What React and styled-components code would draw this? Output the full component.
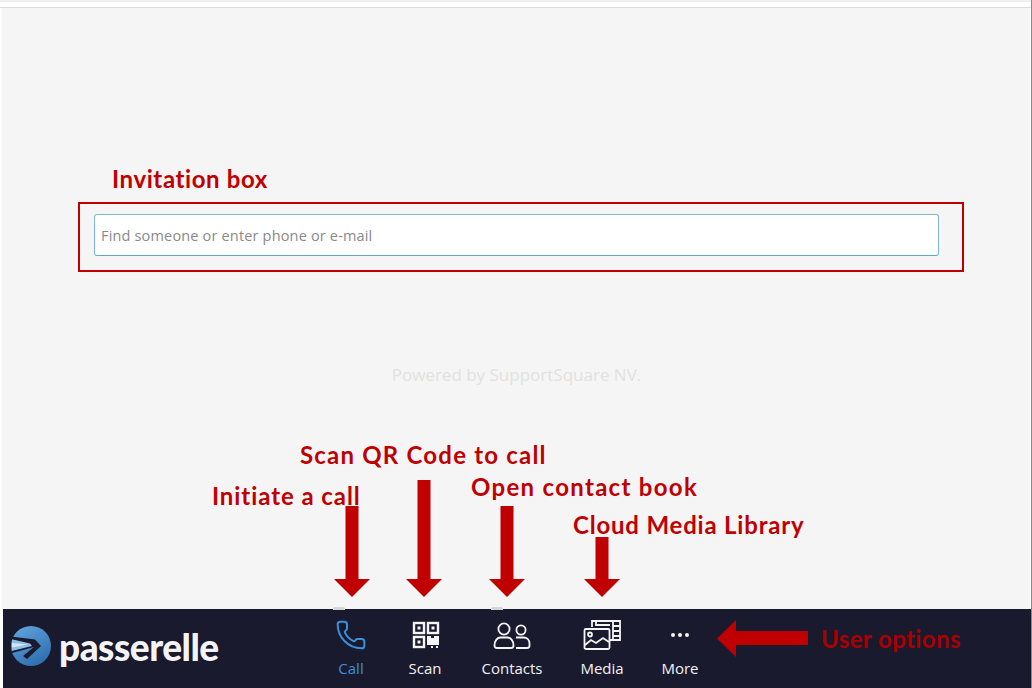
import React from "react";
import styled, { createGlobalStyle } from "styled-components";
import { Phone } from "lucide-react";

const Global = createGlobalStyle`
  html, body { margin: 0; padding: 0; background: #fff; }
  * { box-sizing: border-box; }
`;

const Page = styled.div`
  position: relative;
  width: 1032px;
  height: 688px;
  overflow: hidden;
  display: flex;
  flex-direction: column;
  background: #fff;
  padding: 0 1px 0 2px;
  border-right: 1px solid #8a8a8a;
  font-family: "Open Sans", sans-serif;
`;

const TopRule = styled.div`
  height: 8px;
  flex: none;
  margin: 0 -1px 0 -2px;
  background: #fff;
  border-top: 2px solid #efefef;
  border-bottom: 1px solid #dcdcdc;
`;

const Main = styled.main`
  flex: 1;
  background: #f5f5f5;
  display: flex;
  flex-direction: column;
  align-items: center;
  padding: 206px 91px 0 92px;
`;

const Search = styled.input`
  width: 100%;
  height: 42px;
  flex: none;
  border: 1px solid #7fb8c8;
  border-bottom-color: #62a9bd;
  border-radius: 3px;
  background: #fff;
  padding: 0 6px;
  font: 14.5px "Open Sans", sans-serif;
  letter-spacing: 0.17px;
  outline: none;
  &::placeholder { color: #8a8a8a; opacity: 1; }
`;

const Powered = styled.p`
  margin: 108px 0 0;
  font-size: 17px;
  line-height: 22px;
  color: #e1e1e1;
`;

const Nav = styled.nav`
  height: 79px;
  flex: none;
  margin-left: 1px;
  margin-right: -1px;
  background: #1a1a2e;
  display: flex;
  align-items: flex-start;
  padding-left: 8px;
`;

const Brand = styled.div`
  display: flex;
  align-items: center;
  gap: 8px;
  height: 78px;
  width: 302px;
  padding-bottom: 4px;
  flex: none;
`;

const BrandName = styled.span`
  font-family: Lato, sans-serif;
  font-weight: 900;
  font-size: 37px;
  letter-spacing: -0.5px;
  line-height: 1;
  color: #f4f4f6;
`;

const Items = styled.div`
  display: flex;
  align-items: flex-start;
  height: 100%;
`;

const Item = styled.button`
  appearance: none;
  border: 0;
  background: none;
  padding: 10px 0 0;
  width: ${p => p.$w}px;
  display: flex;
  flex-direction: column;
  align-items: center;
  color: ${p => (p.$active ? "#3a90dc" : "#f2f2f2")};
  font: 15px/20px "Open Sans", sans-serif;
`;

const IconSlot = styled.span`
  height: 32px;
  margin-bottom: 7px;
  display: flex;
  align-items: center;
  justify-content: center;
`;

const Nub = styled.span`
  position: absolute;
  top: 607px;
  left: ${p => p.$x}px;
  width: 12px;
  height: 3px;
  border-radius: 2px 2px 0 0;
  background: #d5d5d8;
`;

const Frame = styled.div`
  position: absolute;
  left: 78px;
  top: 202px;
  width: 886px;
  height: 70px;
  border: 2px solid #c00000;
  pointer-events: none;
`;

const Note = styled.span`
  position: absolute;
  left: ${p => p.$x}px;
  top: ${p => p.$y}px;
  font-family: Lato, sans-serif;
  font-weight: 700;
  font-size: 24px;
  line-height: 28px;
  letter-spacing: ${p => p.$ls}px;
  white-space: nowrap;
  color: ${p => p.$c || "#c00000"};
`;

const ArrowMark = styled.svg`
  position: absolute;
  left: ${p => p.$x}px;
  top: ${p => p.$y}px;
  display: block;
`;

const DownArrow = ({ x, top }) => {
  const h = 597 - top;
  return (
    <ArrowMark $x={x} $y={top} width="36" height={h} viewBox={`0 0 36 ${h}`}>
      <path d={`M11.5 0H24.5V${h - 18}H36L18 ${h}L0 ${h - 18}H11.5Z`} fill="#c00000" />
    </ArrowMark>
  );
};

const QrIcon = () => (
  <svg width="28" height="28" viewBox="0 0 28 28" fill="none" stroke="#f5f5f5" strokeWidth="2.400" style={{ marginLeft: 2 }}>
    <rect x="2" y="2" width="10" height="10" />
    <rect x="16" y="2" width="10" height="10" />
    <rect x="2" y="16" width="10" height="10" />
    <g fill="#f5f5f5" stroke="none">
      <rect x="5.500" y="5.500" width="3" height="3" />
      <rect x="19.500" y="5.500" width="3" height="3" />
      <rect x="5.500" y="19.500" width="3" height="3" />
      <path d="M15 15h4v2h3v-2h5v9h-12z" />
      <rect x="19" y="25" width="2" height="2" />
      <rect x="24" y="25" width="2" height="2" />
    </g>
  </svg>
);

const ContactsIcon = () => (
  <svg width="38" height="30" viewBox="0 0 38 30" fill="none" stroke="#f5f5f5" strokeWidth="1.800">
    <circle cx="11" cy="9" r="5.600" />
    <path d="M1.500 25.500c0-5 3-8 6-8h7c3 0 6 3 6 8 0 1.500-.8 2.500-2.500 2.500H4c-1.700 0-2.500-1-2.500-2.500z" />
    <circle cx="28" cy="10" r="4.600" />
    <path d="M23 17.500h7.500c3.500 0 6 2.500 6 6v2c0 1.500-1 2.500-2.500 2.500H23" />
  </svg>
);

const MediaIcon = () => (
  <svg width="38" height="32" viewBox="0 0 38 32" fill="none" stroke="#f5f5f5" strokeWidth="1.800">
    <path d="M9 8V2h28v19H27" />
    <path d="M13 2v4h14" />
    <path d="M30 2v19M30 7h7M30 12h7M30 17h7" />
    <rect x="1.500" y="10" width="25" height="20" rx="1.500" fill="#1a1a2e" />
    <circle cx="7" cy="15.500" r="2" />
    <path d="M2 26l6-5 5 3 7-5 6 4" />
  </svg>
);

const DotsIcon = () => (
  <svg width="22" height="6" viewBox="0 0 22 6" fill="#f5f5f5">
    <circle cx="4" cy="3" r="2" />
    <circle cx="11" cy="3" r="2" />
    <circle cx="18" cy="3" r="2" />
  </svg>
);

const LogoMark = () => (
  <svg width="40" height="40" viewBox="0 0 40 40">
    <defs>
      <linearGradient id="lg" x1="0" y1="0" x2="0.6" y2="1">
        <stop offset="0" stopColor="#65a8e0" />
        <stop offset="1" stopColor="#2f70b0" />
      </linearGradient>
    </defs>
    <circle cx="20" cy="20" r="20" fill="url(#lg)" />
    <path d="M1 13.500 L22 16 L25 19.800 L1 25Z" fill="#8fbde4" />
    <path d="M0 10.500 L24 13.500 L30 20 L16 33 L12 30 L23 21 L1 27 L1 25 L21 20 L19 17.500 L0 13Z" fill="#1a1a2e" />
    <path d="M1 17 L17 18.500 L1 21.500Z" fill="#d5e6f5" />
  </svg>
);

export default function App() {
  return (
    <Page>
      <Global />
      <TopRule />
      <Main>
        <Search placeholder="Find someone or enter phone or e-mail" readOnly />
        <Powered>Powered by SupportSquare NV.</Powered>
      </Main>
      <Nav>
        <Brand>
          <LogoMark />
          <BrandName>passerelle</BrandName>
        </Brand>
        <Items>
          <Item $w={76} $active>
            <IconSlot><Phone size={32} strokeWidth={1.500} color="#3a90dc" /></IconSlot>
            Call
          </Item>
          <Item $w={72}>
            <IconSlot><QrIcon /></IconSlot>
            Scan
          </Item>
          <Item $w={102}>
            <IconSlot><ContactsIcon /></IconSlot>
            Contacts
          </Item>
          <Item $w={78}>
            <IconSlot><MediaIcon /></IconSlot>
            Media
          </Item>
          <Item $w={78}>
            <IconSlot><DotsIcon /></IconSlot>
            More
          </Item>
        </Items>
      </Nav>
      <Nub $x={333} />
      <Nub $x={491} />
      <Frame />
      <Note $x={112} $y={165} $ls={0.6}>Invitation box</Note>
      <Note $x={300} $y={441} $ls={1.200}>Scan QR Code to call</Note>
      <Note $x={212} $y={482} $ls={0.930}>Initiate a call</Note>
      <Note $x={471} $y={473} $ls={1.300}>Open contact book</Note>
      <Note $x={573} $y={511} $ls={0.800}>Cloud Media Library</Note>
      <Note $x={821} $y={625} $ls={0.4} $c="#a80000">User options</Note>
      <DownArrow x={334} top={506} />
      <DownArrow x={406} top={480} />
      <DownArrow x={489} top={506} />
      <DownArrow x={584} top={537} />
      <ArrowMark $x={717} $y={620} width="91" height="37" viewBox="0 0 91 37">
        <path d="M91 11V25H19V37L0 18.500L19 0V11Z" fill="#c00000" />
      </ArrowMark>
    </Page>
  );
}
